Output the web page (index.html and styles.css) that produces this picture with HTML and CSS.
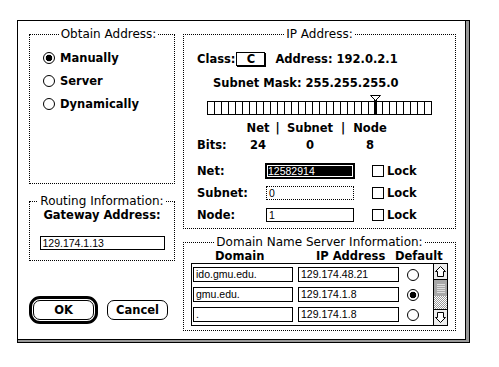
FILE: index.html
```html
<!DOCTYPE html>
<html lang="en">
<head>
  <meta charset="UTF-8">
  <title>MacTCP</title>
  <link rel="stylesheet" href="styles.css">
</head>
<body>
<div class="frame">
  <div class="window">
    <div class="col">
      <fieldset class="group obtain">
        <legend>Obtain Address:</legend>
        <div class="radio-row"><span class="radio on"></span>Manually</div>
        <div class="radio-row"><span class="radio"></span>Server</div>
        <div class="radio-row"><span class="radio"></span>Dynamically</div>
      </fieldset>
      <fieldset class="group routing">
        <legend>Routing Information:</legend>
        <div class="gw b">Gateway Address:</div>
        <div class="field gw-field">129.174.1.13</div>
      </fieldset>
      <div class="buttons">
        <div class="ring"><button class="btn">OK</button></div>
        <button class="btn cancel">Cancel</button>
      </div>
    </div>

    <div class="col">
      <fieldset class="group ip">
        <legend>IP Address:</legend>
        <div class="class-row b">
          <span>Class:</span>
          <span class="popup">C</span>
          <span class="addr">Address: 192.0.2.1</span>
        </div>
        <div class="mask-row b">Subnet Mask: 255.255.255.0</div>
        <svg class="slider" width="226" height="20" viewBox="0 0 226 20" shape-rendering="crispEdges">
          <rect x="0.5" y="6.5" width="224" height="13" fill="#fff" stroke="#000"/>
          <path d="M7.5 6v14m7-14v14m7-14v14m7-14v14m7-14v14m7-14v14m7-14v14m7-14v14m7-14v14m7-14v14m7-14v14m7-14v14m7-14v14m7-14v14m7-14v14m7-14v14m7-14v14m7-14v14m7-14v14m7-14v14m7-14v14m7-14v14m7-14v14m7-14v14m7-14v14m7-14v14m7-14v14m7-14v14m7-14v14m7-14v14m7-14v14" stroke="#000"/>
          <rect x="167" y="4" width="3" height="16" fill="#000"/>
          <polygon points="163.5,0.5 173.5,0.5 168.5,5.5" fill="#fff" stroke="#000" shape-rendering="auto"/>
        </svg>
        <div class="bits b">
          <span></span><span>Net</span><span>|</span><span>Subnet</span><span>|</span><span>Node</span>
          <span class="lbl">Bits:</span><span>24</span><span></span><span>0</span><span></span><span>8</span>
        </div>
        <div class="frows">
          <div class="frow">
            <span class="flabel b">Net:</span>
            <div class="field net sel">12582914</div>
            <span class="check"></span><span class="b">Lock</span>
          </div>
          <div class="frow">
            <span class="flabel b">Subnet:</span>
            <div class="field net dotted">0</div>
            <span class="check"></span><span class="b">Lock</span>
          </div>
          <div class="frow">
            <span class="flabel b">Node:</span>
            <div class="field net">1</div>
            <span class="check"></span><span class="b">Lock</span>
          </div>
        </div>
      </fieldset>

      <fieldset class="group dns">
        <legend>Domain Name Server Information:</legend>
        <div class="dns-head b">
          <span class="h-dom">Domain</span><span class="h-ip">IP Address</span><span>Default</span>
        </div>
        <div class="table">
          <div class="rows">
            <div class="trow">
              <div class="field dom">ido.gmu.edu.</div>
              <div class="field ipf">129.174.48.21</div>
              <span class="radio"></span>
            </div>
            <div class="trow">
              <div class="field dom">gmu.edu.</div>
              <div class="field ipf">129.174.1.8</div>
              <span class="radio on"></span>
            </div>
            <div class="trow">
              <div class="field dom">.</div>
              <div class="field ipf">129.174.1.8</div>
              <span class="radio"></span>
            </div>
          </div>
          <div class="scroll">
            <div class="arrow up">
              <svg width="13" height="15" viewBox="0 0 13 15"><path d="M6.5 2.5L11.5 7.5H9.5V12.5H3.5V7.5H1.5Z" fill="#fff" stroke="#000"/></svg>
            </div>
            <div class="thumb"></div>
            <div class="track"></div>
            <div class="arrow down">
              <svg width="13" height="15" viewBox="0 0 13 15"><path d="M6.5 12.5L11.5 7.5H9.5V2.5H3.5V7.5H1.5Z" fill="#fff" stroke="#000"/></svg>
            </div>
          </div>
        </div>
      </fieldset>
    </div>
  </div>
</div>
</body>
</html>
```

FILE: styles.css
```css
body {
  margin: 0;
  background: #fff;
  color: #000;
  font-family: "DejaVu Sans", sans-serif;
}
.frame {
  margin: 20px 0 0 17px;
  width: max-content;
  border: 1px solid #000;
  background: #999;
  padding: 0 3px 2px 0;
}
.window {
  box-sizing: border-box;
  width: 448px;
  height: 319px;
  background: #fff;
  border-right: 1px solid #000;
  border-bottom: 1px solid #000;
  padding: 7px 9px 0 11px;
  display: grid;
  grid-template-columns: 146px 273px;
  column-gap: 8px;
  align-items: start;
}
.col {
  display: flex;
  flex-direction: column;
}
.b {
  font-weight: bold;
  font-size: 11.5px;
}

/* dotted group boxes */
.group {
  box-sizing: border-box;
  margin: 0;
  padding: 0;
  min-width: 0;
  border: 1px dotted #000;
}
.group legend {
  margin: 0 auto;
  padding: 0 2px;
  font-size: 12px;
  line-height: 13px;
}

/* obtain address */
.obtain {
  height: 156px;
  padding: 5px 0 0 13px;
}
.radio-row {
  display: flex;
  align-items: center;
  gap: 5px;
  height: 23px;
  font-weight: bold;
  font-size: 11.5px;
}
.radio {
  box-sizing: border-box;
  width: 12px;
  height: 12px;
  border: 1px solid #000;
  border-radius: 50%;
  background: #fff;
  flex: none;
}
.radio.on {
  background: radial-gradient(circle, #000 0 3px, #fff 3.6px);
}

/* routing */
.routing {
  margin-top: 11px;
  height: 66px;
  text-align: center;
}
.gw {
  line-height: 14px;
}
.gw-field {
  width: 125px;
  margin: 14px auto 0;
  text-align: left;
}

/* text fields */
.field {
  box-sizing: border-box;
  height: 14px;
  border: 1px solid #000;
  padding-left: 2px;
  font-family: "Liberation Sans", sans-serif;
  font-size: 10.5px;
  line-height: 12px;
  background: #fff;
  white-space: nowrap;
  overflow: hidden;
}
.field.dotted {
  border-style: dotted;
}
.field.sel {
  padding-left: 1px;
  background: #000;
  color: #fff;
  box-shadow: 0 0 0 1px #000, inset 0 0 0 1px #fff;
}

/* buttons */
.buttons {
  margin-top: 35px;
  display: flex;
  align-items: center;
}
.ring {
  border: 3px solid #000;
  border-radius: 11px;
  padding: 1px;
  display: flex;
}
.btn {
  box-sizing: border-box;
  width: 61px;
  height: 20px;
  margin: 0;
  padding: 0;
  border: 1px solid #000;
  border-radius: 7px;
  background: #fff;
  color: #000;
  font-family: "DejaVu Sans", sans-serif;
  font-weight: bold;
  font-size: 11.5px;
}
.cancel {
  margin-left: 9px;
}

/* ip address */
.ip {
  height: 201px;
}
.class-row {
  display: flex;
  align-items: center;
  height: 16px;
  margin-top: 10px;
  padding-left: 13px;
}
.popup {
  box-sizing: border-box;
  width: 29px;
  height: 14px;
  margin-left: 1px;
  border: 1px solid #000;
  box-shadow: 1px 1px 0 #000;
  text-align: center;
  line-height: 12px;
}
.addr {
  margin-left: 10px;
}
.mask-row {
  height: 16px;
  line-height: 16px;
  margin-top: 8px;
  padding-left: 29px;
}
.slider {
  display: block;
  margin: 4px 0 0 23px;
}
.bits {
  display: grid;
  grid-template-columns: 43px 36px 3px 62px 4px 50px;
  grid-auto-rows: 17px;
  align-items: center;
  justify-items: center;
  margin-top: 4px;
  padding-left: 13px;
}
.bits .lbl {
  justify-self: start;
}
.frows {
  margin-top: 10px;
  display: flex;
  flex-direction: column;
  gap: 6px;
}
.frow {
  display: flex;
  align-items: center;
  height: 16px;
  padding-left: 13px;
}
.flabel {
  width: 69px;
}
.field.net {
  width: 88px;
}
.check {
  box-sizing: border-box;
  width: 12px;
  height: 12px;
  border: 1px solid #000;
  margin: 0 3px 0 18px;
}

/* dns */
.dns {
  margin-top: 7px;
  height: 95px;
}
.dns-head {
  display: flex;
  height: 13px;
  line-height: 13px;
  margin-top: 1px;
  padding-left: 31px;
}
.h-dom {
  width: 101px;
}
.h-ip {
  width: 79px;
}
.table {
  box-sizing: border-box;
  width: 257px;
  height: 63px;
  margin-left: 7px;
  border: 1px solid #000;
  display: flex;
}
.rows {
  flex: 1;
  padding: 3px 0 0 1px;
  display: flex;
  flex-direction: column;
  gap: 5px;
}
.trow {
  display: flex;
  align-items: center;
  height: 15px;
}
.trow .field {
  height: 15px;
  line-height: 13px;
}
.field.dom {
  width: 100px;
}
.field.ipf {
  width: 101px;
  margin-left: 5px;
}
.trow .radio {
  margin-left: 8px;
}
.scroll {
  width: 13px;
  border-left: 1px solid #000;
  display: flex;
  flex-direction: column;
}
.arrow {
  height: 15px;
  background: #eee;
}
.arrow svg {
  display: block;
}
.arrow.up {
  border-bottom: 1px solid #000;
}
.arrow.down {
  border-top: 1px solid #000;
}
.thumb {
  height: 16px;
  background: #a8a8a8;
  display: flex;
  align-items: center;
  justify-content: center;
}
.thumb::before {
  content: "";
  width: 8px;
  height: 9px;
  background: repeating-linear-gradient(to bottom, #ddd 0 1px, #a8a8a8 1px 2px);
}
.track {
  height: 13px;
  background: repeating-conic-gradient(#999 0 25%, #fff 0 50%) 0 0 / 2px 2px;
}
```
